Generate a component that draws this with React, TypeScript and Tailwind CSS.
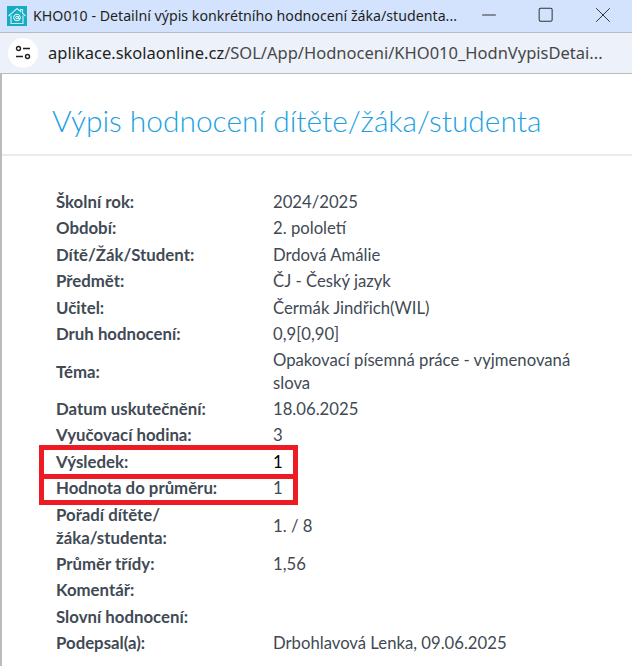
import React from 'react';
import { Minus, Square, X } from 'lucide-react';

const font = "font-['Lato','Noto_Sans',sans-serif]";

type Row = { label: React.ReactNode; value: React.ReactNode; h: string; dark?: boolean };

const rows: Row[] = [
  { label: 'Školní rok:', value: '2024/2025', h: 'h-[26.5px]' },
  { label: 'Období:', value: '2. pololetí', h: 'h-[26.5px]' },
  { label: 'Dítě/Žák/Student:', value: 'Drdová Amálie', h: 'h-[26.5px]' },
  { label: 'Předmět:', value: 'ČJ - Český jazyk', h: 'h-[26.5px]' },
  { label: 'Učitel:', value: 'Čermák Jindřich(WIL)', h: 'h-[26.5px]' },
  { label: 'Druh hodnocení:', value: '0,9[0,90]', h: 'h-[26.5px]' },
  { label: 'Téma:', value: <>Opakovací písemná práce - vyjmenovaná<br />slova</>, h: 'h-[48px]' },
  { label: 'Datum uskutečnění:', value: '18.06.2025', h: 'h-[26.5px]' },
  { label: 'Vyučovací hodina:', value: '3', h: 'h-[26.5px]' },
  { label: 'Výsledek:', value: '1', h: 'h-[26.5px]', dark: true },
  { label: 'Hodnota do průměru:', value: '1', h: 'h-[26.5px]' },
  { label: <>Pořadí dítěte/<br />žáka/studenta:</>, value: '1. / 8', h: 'h-[49px]' },
  { label: 'Průměr třídy:', value: '1,56', h: 'h-[26.5px]' },
  { label: 'Komentář:', value: '', h: 'h-[26.5px]' },
  { label: 'Slovní hodnocení:', value: '', h: 'h-[26.5px]' },
  { label: 'Podepsal(a):', value: 'Drbohlavová Lenka, 09.06.2025', h: 'h-[26.5px]' },
];

const HomeIcon = () => (
  <svg width="20" height="20" viewBox="0 0 20 20" className="shrink-0">
    <rect width="20" height="20" fill="#16adc4" />
    <path d="M1.5 10 10 2.5l3.5 3V3.5h2v3.8L18.5 10" fill="none" stroke="#c4eef3" strokeWidth="1.2" />
    <path d="M4 9.5V17.5h12V9.5" fill="none" stroke="#c4eef3" strokeWidth="1.2" />
    <circle cx="10" cy="11.5" r="3.3" fill="none" stroke="#fff" strokeWidth="1" />
    <circle cx="10" cy="11.5" r="1.3" fill="none" stroke="#fff" strokeWidth="0.9" />
    <path d="M11.4 10v2.4c0 .9 1.9.9 1.9-.9" fill="none" stroke="#fff" strokeWidth="0.8" />
  </svg>
);

const SiteIcon = () => (
  <svg width="16" height="16" viewBox="0 0 16 16" fill="none" stroke="#1f1f1f" strokeWidth="1.4">
    <circle cx="3.5" cy="3.5" r="2" />
    <path d="M8 3.5h7M1 11.5h7" />
    <circle cx="12.5" cy="11.5" r="2" />
  </svg>
);

export default function App() {
  return (
    <div className={`w-[632px] h-[666px] overflow-hidden bg-white flex flex-col ${font}`}>
      <div className="h-[32px] shrink-0 bg-[#d3e3fd] flex items-center pl-[7px] font-['Noto_Sans',sans-serif] text-[14.2px] text-[#1f1f1f]">
        <HomeIcon />
        <span className="ml-[6px] w-[440px] whitespace-nowrap overflow-hidden">KHO010 - Detailní výpis konkrétního hodnocení žáka/studenta...</span>
        <div className="flex items-center ml-[5px] -mt-[3px] text-[#333]">
          <Minus size={22} strokeWidth={1.1} />
          <Square size={17.3} strokeWidth={1.4} className="ml-[36.5px]" />
          <X size={26} strokeWidth={0.92} className="ml-[36.5px]" />
        </div>
      </div>
      <div className="flex-1 min-h-0 flex flex-col border-l-2 border-[#b9bbbe]">
        <div className="h-[42px] shrink-0 -ml-[2px] bg-[#edf2fa] border-t border-b border-[#b9bbbe] flex items-center pl-[8px] font-['Noto_Sans',sans-serif] text-[16.5px] text-[#1f1f1f]">
          <div className="w-[30px] h-[30px] rounded-full bg-white flex items-center justify-center shrink-0">
            <SiteIcon />
          </div>
          <span className="ml-[10px] whitespace-nowrap">aplikace.skolaonline.cz<span className="text-[#474747]">/SOL/App/Hodnoceni/KHO010_HodnVypisDetai...</span></span>
        </div>
        <h1 className="h-[82px] shrink-0 border-b-2 border-[#e8eced] pl-[50px] pt-[26px] text-[29.9px] leading-[40px] font-light text-[#1ba1e2] whitespace-nowrap">
          Výpis hodnocení dítěte/žáka/studenta
        </h1>
        <div className="pl-[54px] pt-[32.5px] text-[16.7px] leading-[23px] text-[#3f4a54]">
          {rows.map((row, i) => (
            <div key={i} className={`relative flex items-center ${row.h}`}>
              <div className="w-[217px] shrink-0 font-bold text-[16.8px] pb-[1px]">{row.label}</div>
              <div className={`pt-[0.5px] ${row.dark ? 'text-black' : ''}`}>{row.value}</div>
              {i === 9 && <div className="absolute left-[-17px] top-[-3.5px] w-[259px] h-[34px] border-[5px] border-[#ed1c24]" />}
              {i === 10 && <div className="absolute left-[-17px] top-[-1.5px] w-[259px] h-[31px] border-[5px] border-[#ed1c24]" />}
            </div>
          ))}
        </div>
      </div>
    </div>
  );
}
